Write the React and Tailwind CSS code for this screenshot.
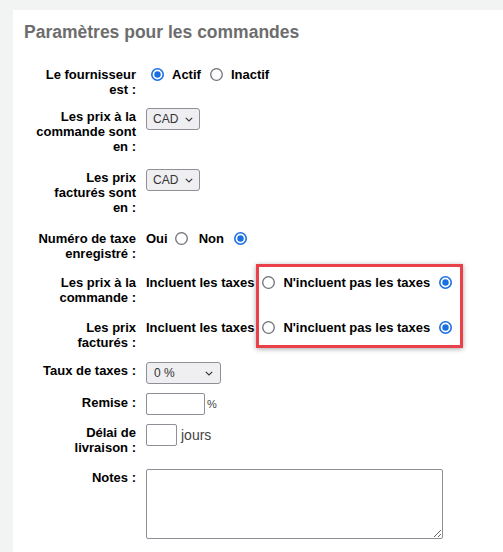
import React from "react";

const BLUE = "#1a6fe3";

function Radio({ checked, className }) {
  return (
    <svg width="13" height="13" viewBox="0 0 13 13" className={className}>
      {checked ? (
        <>
          <circle cx="6.5" cy="6.5" r="5.7" fill="white" stroke={BLUE} strokeWidth="1.6" />
          <circle cx="6.5" cy="6.5" r="3.2" fill={BLUE} />
        </>
      ) : (
        <circle cx="6.5" cy="6.5" r="5.8" fill="white" stroke="#6f6f77" strokeWidth="1.3" />
      )}
    </svg>
  );
}

function Chevron() {
  return (
    <svg width="8" height="5" viewBox="0 0 8 5" className="shrink-0">
      <path d="M0.8 0.8 L4 4 L7.2 0.8" fill="none" stroke="#333" strokeWidth="1.1" />
    </svg>
  );
}

function Row({ label, h, children }) {
  return (
    <div className={"flex items-start " + h}>
      <div className="w-[102px] shrink-0 pt-[1px] text-right text-[13px] font-bold leading-[15px] text-black">
        {label}
      </div>
      <div className="ml-[10px]">{children}</div>
    </div>
  );
}

const NB = "\u00a0";

export default function App() {
  return (
    <div className="relative min-h-[552px] w-full bg-[#f2f3f3] pl-[13px] pt-[10px] font-['Liberation_Sans',Arial,sans-serif]">
      <div className="h-[542px] bg-white pl-[11px] pt-[12px]">
        <h1 className="text-[17.5px] font-bold leading-[20px] text-[#6d6d6d]">
          Paramètres pour les commandes
        </h1>
        <div className="ml-[10px] mt-[24px] flex flex-col">
          <Row label={"Le fournisseur est" + NB + ":"} h="h-[42px]">
            <div className="mt-[1px] flex h-[15px] items-center text-[13px] font-bold text-black">
              <Radio checked className="ml-[5px]" />
              <span className="ml-[8px]">Actif</span>
              <Radio className="ml-[9px]" />
              <span className="ml-[8px]">Inactif</span>
            </div>
          </Row>
          <Row label={"Les prix à la commande sont en" + NB + ":"} h="h-[61px]">
            <div className="flex h-[22px] w-[54px] items-center justify-between rounded-[3px] border border-[#8f8f98] bg-[#efeff1] pl-[6px] pr-[6px] text-[12px] text-[#333]">
              <span>CAD</span>
              <Chevron />
            </div>
          </Row>
          <Row label={"Les prix facturés sont en" + NB + ":"} h="h-[61px]">
            <div className="flex h-[22px] w-[54px] items-center justify-between rounded-[3px] border border-[#8f8f98] bg-[#efeff1] pl-[6px] pr-[6px] text-[12px] text-[#333]">
              <span>CAD</span>
              <Chevron />
            </div>
          </Row>
          <Row label={"Numéro de taxe enregistré" + NB + ":"} h="h-[44px]">
            <div className="mt-[1px] flex h-[15px] items-center text-[13px] font-bold text-black">
              <span>Oui</span>
              <Radio className="ml-[7px]" />
              <span className="ml-[11px]">Non</span>
              <Radio checked className="ml-[10px]" />
            </div>
          </Row>
          <Row label={"Les prix à la commande" + NB + ":"} h="h-[45px]">
            <div className="mt-[1px] flex h-[15px] items-center whitespace-nowrap text-[13px] font-bold text-black">
              <span>Incluent les taxes</span>
              <Radio className="ml-[8px]" />
              <span className="ml-[8px]">N'incluent pas les taxes</span>
              <Radio checked className="ml-[9px]" />
            </div>
          </Row>
          <Row label={"Les prix facturés" + NB + ":"} h="h-[43px]">
            <div className="mt-[1px] flex h-[15px] items-center whitespace-nowrap text-[13px] font-bold text-black">
              <span>Incluent les taxes</span>
              <Radio className="ml-[8px]" />
              <span className="ml-[8px]">N'incluent pas les taxes</span>
              <Radio checked className="ml-[9px]" />
            </div>
          </Row>
          <Row label={"Taux de taxes" + NB + ":"} h="h-[32px]">
            <div className="flex h-[22px] w-[75px] items-center justify-between rounded-[3px] border border-[#8f8f98] bg-[#efeff1] pl-[7px] pr-[7px] text-[12px] text-[#333]">
              <span>0 %</span>
              <Chevron />
            </div>
          </Row>
          <Row label={"Remise" + NB + ":"} h="h-[30px]">
            <div className="-mt-[1px] flex items-center">
              <div className="h-[22px] w-[59px] rounded-[2px] border border-[#8f8f98] bg-white" />
              <span className="ml-[2px] text-[11px] text-[#444]">%</span>
            </div>
          </Row>
          <Row label={"Délai de livraison" + NB + ":"} h="h-[45px]">
            <div className="flex items-center">
              <div className="h-[22px] w-[31px] rounded-[2px] border border-[#8f8f98] bg-white" />
              <span className="ml-[4px] text-[14px] text-[#444]">jours</span>
            </div>
          </Row>
          <Row label={"Notes" + NB + ":"} h="h-[72px]">
            <textarea
              className="block h-[70px] w-[297px] rounded-[2px] border border-[#8f8f98] bg-white outline-none"
              defaultValue=""
            />
          </Row>
        </div>
      </div>
      <div className="absolute left-[256px] top-[264px] h-[84px] w-[207px] border-[3px] border-[#e9404a] shadow-[0_1px_5px_rgba(0,0,0,0.35)]" />
    </div>
  );
}
